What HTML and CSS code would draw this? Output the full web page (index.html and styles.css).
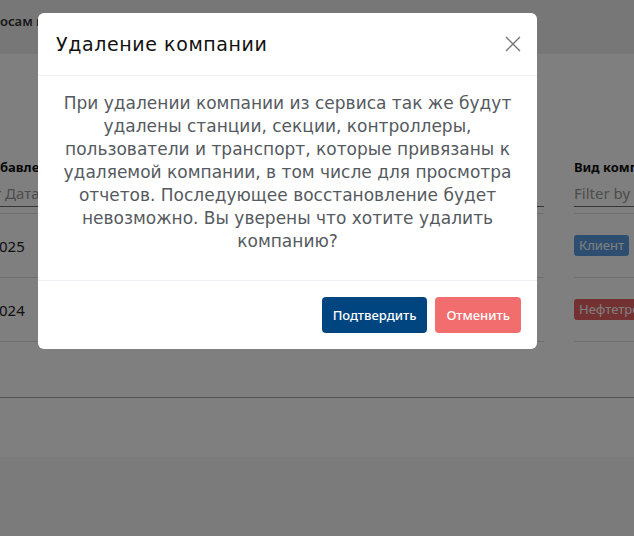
FILE: index.html
```html
<!doctype html>
<html lang="ru">
<head>
	<meta charset="UTF-8">
	<title>Компании</title>
	<link rel="stylesheet" href="styles.css">
</head>
<body>
<!--страница под модалкой-->
<div class="page">
	<div class="topbar">
		<div class="crumbs">осам и отчетам</div>
	</div>
	<div class="content">
		<div class="grid_scroll">
			<div class="grid">
				<div class="th">
					<div class="th_title">бавления</div>
					<div class="filter filter_date"><span class="ph">r Дата</span></div>
				</div>
				<div class="th">
					<div class="th_title">Вид компании</div>
					<div class="filter"><span class="ph">Filter by вид</span></div>
				</div>
				<div class="td td_date">025</div>
				<div class="td"><span class="badge blue">Клиент</span></div>
				<div class="td td_date">024</div>
				<div class="td"><span class="badge red">Нефтетрейдер</span></div>
			</div>
		</div>
		<div class="pager"></div>
	</div>
	<div class="bottom"></div>
</div>

<!--модалка удаления-->
<div class="backdrop">
	<div class="modal">
		<div class="modal_head">
			<h5>Удаление компании</h5>
			<button class="close" aria-label="Закрыть">
				<svg width="16" height="16" viewBox="0 0 16 16"><path d="M1 1L15 15M15 1L1 15" stroke="#777" stroke-width="1.4" fill="none"/></svg>
			</button>
		</div>
		<div class="modal_body">
			<p>При удалении компании из сервиса так же будут удалены станции, секции, контроллеры, пользователи и транспорт, которые привязаны к удаляемой компании, в том числе для просмотра отчетов. Последующее восстановление будет невозможно. Вы уверены что хотите удалить компанию?</p>
		</div>
		<div class="modal_foot">
			<button class="btn btn_ok">Подтвердить</button>
			<button class="btn btn_cancel">Отменить</button>
		</div>
	</div>
</div>
</body>
</html>
```
FILE: styles.css
```css
*{margin:0;padding:0;box-sizing:border-box}
body{
	font-family:"Noto Sans","Liberation Sans",sans-serif;
	color:#212529;
	width:634px;
	height:536px;
	overflow:hidden;
	background:#f6f6f6;
}
.page{height:536px;display:flex;flex-direction:column}
.topbar{
	height:54px;
	background:#eeeeee;
	padding-top:12px;
}
.crumbs{font-size:13px;font-weight:600;color:#333;white-space:nowrap}
.content{
	height:403px;
	background:#fff;
}
.grid_scroll{overflow:hidden;padding-top:102px}
.grid{
	display:grid;
	grid-template-columns:544px 140px;
	column-gap:30px;
}
.th{padding-bottom:6px;border-bottom:1px solid #dcdcdc;white-space:nowrap}
.th_title{font-size:13px;font-weight:700;color:#111;height:22px;padding-top:2px}
.filter{
	height:29px;
	border-bottom:1px solid #6e6e6e;
	font-size:15px;
	padding-top:5px;
}
.filter_date{margin-left:-5px}
.ph{color:#9a9a9a}
.td{
	height:64px;
	border-bottom:1px solid #dcdcdc;
	display:flex;
	align-items:center;
	font-size:15px;
	color:#222;
	white-space:nowrap;
}
.td_date{margin-left:-1px}
.badge{
	font-size:13px;
	color:#fff;
	padding:1px 5px 2px;
	border-radius:3px;
}
.badge.blue{background:#5a9de0}
.badge.red{background:#e86262}
.pager{height:56px;border-bottom:1px solid #a8a8a8}
.bottom{flex:1;background:#f6f6f6}

.backdrop{
	position:fixed;
	top:0;left:0;right:0;bottom:0;
	background:rgba(0,0,0,0.5);
}
.modal{
	position:absolute;
	top:13px;
	left:38px;
	width:499px;
	background:#fff;
	border-radius:6px;
	font-family:"DejaVu Sans","Noto Sans",sans-serif;
}
.modal_head{
	height:63px;
	display:flex;
	align-items:center;
	justify-content:space-between;
	padding:0 16px 0 18px;
	border-bottom:1px solid #eeeff2;
}
.modal_head h5{font-size:19px;font-weight:400;color:#111;letter-spacing:0.6px}
.close{border:0;background:none;width:16px;height:16px;display:flex}
.modal_body{
	padding:16px 20px 27px;
	border-bottom:1px solid #eeeff2;
}
.modal_body p{
	font-size:17px;
	line-height:23px;
	text-align:center;
	color:#555a60;
}
.modal_foot{
	display:flex;
	justify-content:flex-end;
	gap:8px;
	padding:16px;
}
.btn{
	height:36px;
	border:0;
	border-radius:4px;
	color:#fff;
	font-family:"Noto Sans","Liberation Sans",sans-serif;
	font-size:13px;
	font-weight:500;
	padding:0 11px;
}
.btn_ok{background:#00457f}
.btn_cancel{background:#f26d6d}
```
